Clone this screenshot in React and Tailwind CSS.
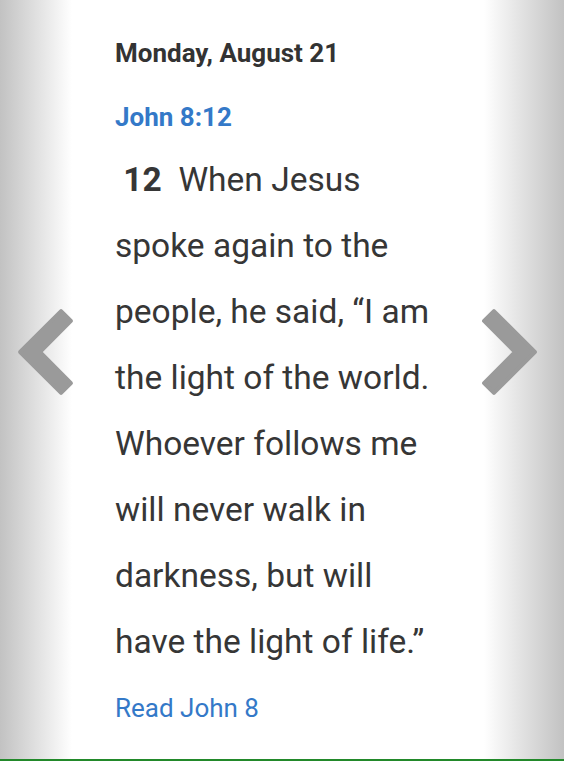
const lines = [
    "spoke again to the",
    "people, he said, “I am",
    "the light of the world.",
    "Whoever follows me",
    "will never walk in",
    "darkness, but will",
    "have the light of life.”",
];

export default function App() {
    return (
        <div className="relative flex h-[761px] w-full bg-white font-['Roboto',sans-serif] border-b-2 border-[#22892a] overflow-hidden">
            <div className="w-[72px] shrink-0 bg-gradient-to-r from-[#c2c2c2] to-white" />
            <div className="flex-1 pl-[43px]">
                <h2 className="mt-[37px] text-[26px] leading-[32px] font-bold text-[#333]">Monday, August 21</h2>
                <h3 className="mt-[32px] text-[26px] leading-[32px] font-bold text-[#3479c8]">John 8:12</h3>
                <p className="mt-[14px] text-[33.5px] leading-[66px] text-[#363636] whitespace-nowrap">
                    <span className="font-bold">&nbsp;12</span>&nbsp; When Jesus
                    {lines.map((l) => (
                        <span key={l}>
                            <br />
                            {l}
                        </span>
                    ))}
                </p>
                <a href="#" className="mt-[17px] block text-[26px] leading-[32px] text-[#3479c8]">Read John 8</a>
            </div>
            <div className="w-[80px] shrink-0 bg-gradient-to-l from-[#c2c2c2] to-white" />

            {/* prev / next chevrons */}
            <button className="absolute left-0 top-[300px]" aria-label="Previous">
                <svg width="90" height="110" viewBox="0 0 90 110">
                    <polygon points="61.05,11.05 70.95,20.95 39.9,52 70.95,83.05 61.05,92.95 20.1,52" fill="#9a9a9a" stroke="#9a9a9a" strokeWidth="4" strokeLinejoin="round" />
                </svg>
            </button>
            <button className="absolute right-0 top-[300px]" aria-label="Next">
                <svg width="90" height="110" viewBox="0 0 90 110">
                    <polygon points="19.95,11.05 10.05,20.95 41.1,52 10.05,83.05 19.95,92.95 60.9,52" fill="#9a9a9a" stroke="#9a9a9a" strokeWidth="4" strokeLinejoin="round" />
                </svg>
            </button>
        </div>
    );
}
